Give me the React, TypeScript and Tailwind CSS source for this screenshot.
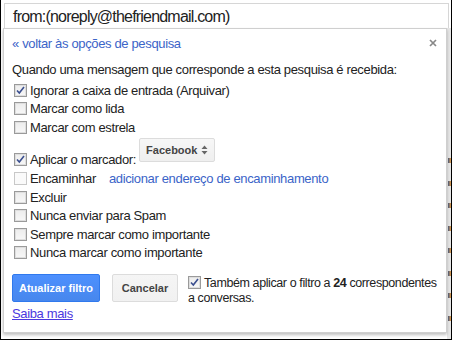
import React from "react";

function Box({ checked = false, light = false }: { checked?: boolean; light?: boolean }) {
  return (
    <svg width="13" height="13" viewBox="0 0 13 13" className="shrink-0">
      <defs>
        <linearGradient id="cbg" x1="0" y1="0" x2="0" y2="1">
          <stop offset="0" stopColor="#ececec" />
          <stop offset="1" stopColor="#f8f8f8" />
        </linearGradient>
      </defs>
      <rect x="0.5" y="0.5" width="12" height="12" fill={light ? "#fafafa" : "url(#cbg)"} stroke={light ? "#c8c8c8" : "#9a9a9a"} />
      {!light && <rect x="1.5" y="1.5" width="10" height="10" fill="none" stroke="#dedede" />}
      {checked && (
        <path d="M3 6.5 L5.3 9 L10 3" fill="none" stroke="#3b4f8f" strokeWidth="1.6" />
      )}
    </svg>
  );
}

function Row({ label, checked = false, light = false, children }: { label: string; checked?: boolean; light?: boolean; children?: React.ReactNode }) {
  return (
    <div className="flex items-center h-[18.5px] pl-[2px]">
      <Box checked={checked} light={light} />
      <span className="ml-[3px]">{label}</span>
      {children}
    </div>
  );
}

export default function App() {
  const marks = [0, 1, 2, 3, 4, 5, 6, 7];
  return (
    <div className="relative w-[452px] h-[340px] bg-white border-l border-r border-b border-black overflow-hidden font-['Liberation_Sans',Arial,sans-serif] text-[13px] tracking-[-0.35px] text-[#222]">
      <div className="absolute left-[446px] top-[28px] w-[4px] h-[311px] bg-[#e6e6e6] flex flex-col items-end pt-[130px] gap-[17.5px]">
        {marks.map((m) => (
          <div key={m} className="w-[3px] h-[5px] bg-gradient-to-r from-[#4a5a7a] to-[#e8a040]" />
        ))}
      </div>
      <div className="flex flex-col pt-[3px] pl-[2px]">
        <div className="ml-[1px] w-[445px] h-[25px] border border-b-0 border-[#d6d6d6] pl-[8px] text-[16px] tracking-[-0.8px] leading-[25px] text-[#222]">
          from:(noreply@thefriendmail.com)
        </div>
        <div className="relative w-[444px] h-[305px] border border-[#cfcfcf] shadow-[0_2px_3px_rgba(0,0,0,0.25)] bg-white pl-[8px] pt-[6px] flex flex-col">
          <svg className="absolute left-[425px] top-[10px]" width="8" height="8" viewBox="0 0 8 8">
            <path d="M1 1 L7 7 M7 1 L1 7" stroke="#888" strokeWidth="1.7" />
          </svg>
          <div className="h-[18px] leading-[18px] text-[#3b64c8]">« voltar às opções de pesquisa</div>
          <div className="mt-[8px] h-[18px] leading-[18px]">Quando uma mensagem que corresponde a esta pesquisa é recebida:</div>
          <div className="mt-[2px]">
            <Row label="Ignorar a caixa de entrada (Arquivar)" checked />
            <Row label="Marcar como lida" />
            <Row label="Marcar com estrela" />
          </div>
          <div className="flex h-[32px] pl-[2px]">
            <div className="flex items-center self-end h-[18px]">
              <Box checked />
              <span className="ml-[3px]">Aplicar o marcador:</span>
            </div>
            <div className="ml-[3px] mt-[1.5px] h-[24px] px-[6px] flex items-center gap-[4px] rounded-[2px] border border-[#dcdcdc] bg-gradient-to-b from-[#f7f7f7] to-[#efefef] text-[11px] tracking-[0px] font-bold text-[#444]">
              Facebook
              <svg width="7" height="10" viewBox="0 0 7 10">
                <path d="M0.5 4 L3.5 0.5 L6.5 4 Z M0.5 6 L3.5 9.5 L6.5 6 Z" fill="#666" />
              </svg>
            </div>
          </div>
          <div className="mt-[1px]">
            <Row label="Encaminhar" light>
              <span className="ml-[13px] text-[#3b64c8]">adicionar endereço de encaminhamento</span>
            </Row>
            <Row label="Excluir" />
            <Row label="Nunca enviar para Spam" />
            <Row label="Sempre marcar como importante" />
            <Row label="Nunca marcar como importante" />
          </div>
          <div className="mt-[12px] flex h-[28px]">
            <div className="w-[88px] h-[28px] rounded-[2px] border border-[#3079ed] bg-gradient-to-b from-[#4d90fe] to-[#4787ed] text-white text-[11px] tracking-[0px] font-bold flex items-center justify-center">
              Atualizar filtro
            </div>
            <div className="ml-[12px] w-[66px] h-[28px] rounded-[2px] border border-[#dcdcdc] bg-gradient-to-b from-[#f5f5f5] to-[#f1f1f1] text-[#444] text-[11px] tracking-[0px] font-bold flex items-center justify-center">
              Cancelar
            </div>
            <div className="ml-[10px] mt-[2px] w-[256px] leading-[15px] shrink-0 text-[12.5px] tracking-[-0.4px]">
              <span className="inline-block align-[-2px] mr-[3px]"><Box checked /></span>
              Também aplicar o filtro a <b>24</b> correspondentes a conversas.
            </div>
          </div>
          <div className="mt-[3px] h-[18px] leading-[18px] text-[#4b38e0] underline self-start">Saiba mais</div>
        </div>
      </div>
    </div>
  );
}
